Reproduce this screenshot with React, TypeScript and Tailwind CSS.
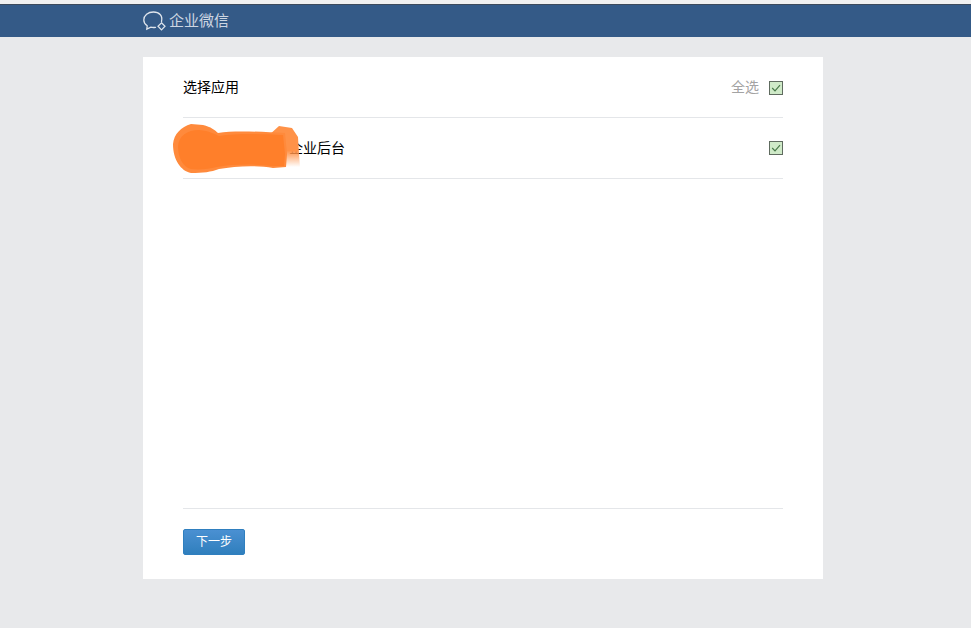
const font = { fontFamily: '"Liberation Sans", "Noto Sans CJK SC", sans-serif' };

function Check() {
  return (
    <span className="flex h-[14px] w-[14px] items-center justify-center border border-[#5f6b5f] bg-[#cfeac8]">
      <svg width="12" height="12" viewBox="0 0 12 12" fill="none">
        <path d="M2.2 6 L5 8.8 L10 3.2" stroke="#4a7a4a" strokeWidth="1.2" />
      </svg>
    </span>
  );
}

function Blob() {
  return (
    <svg className="absolute left-[-10px] top-[6px]" width="130" height="50" viewBox="0 0 130 50">
      <defs>
        <linearGradient id="fade" x1="0" y1="0" x2="0" y2="1">
          <stop offset="0.6" stopColor="#ff9248" />
          <stop offset="1" stopColor="#ff9248" stopOpacity="0" />
        </linearGradient>
      </defs>
      <path d="M95 12 L106 2 L119 4 L125 13 L126 30 L127 43 L100 43 Z" fill="url(#fade)" />
      <path d="M0 20 C1 10 8 3 18 0 L30 1 C38 3 42 6 45 9 C62 6 90 8 112 9 L114 30 L113 43 L100 44 C84 41 62 42 46 45 C38 48 30 49 18 49 C8 47 0 36 0 20 Z" fill="#ff8a3c" />
      <path d="M5 22 C6 12 14 6 26 6 C36 7 42 10 46 12 C64 9 90 10 110 11 L112 30 L111 42 L98 42 C84 40 62 40 44 43 C36 45 26 46 18 45 C10 43 5 34 5 22 Z" fill="#ff7f2a" />
    </svg>
  );
}

export default function App() {
  return (
    <div className="flex h-[628px] w-[971px] flex-col overflow-hidden bg-[#e8e9eb]" style={font}>
      <div className="h-[4px] bg-[#f0f0f0]" />
      <header className="h-[33px] border-t border-[#3d4a5c] bg-[#345a87]">
        <div className="ml-[143px] flex h-[32px] items-center gap-[2px] text-[15px] text-[#cdd6e2]">
          <svg width="24" height="22" viewBox="0 0 24 22" fill="none" stroke="#dfe5ec" strokeWidth="1.3">
            <path d="M18.5 11.5 C20 5.5 16 2 10.5 2 C5 2 0.8 5.5 0.8 10 C0.8 12.6 2.2 14.5 4.2 15.8 L3.8 19.2 L7.8 17.2 C9.5 17.6 11 17.6 12.5 17.3" strokeLinecap="round" />
            <path d="M18.5 12.8 L22 16.2 L18.5 19.8 L15 16.2 Z" strokeWidth="1.2" />
          </svg>
          <span>企业微信</span>
        </div>
      </header>
      <main className="ml-[143px] mt-[20px] flex h-[522px] w-[680px] flex-col bg-white px-[40px]">
        <div className="flex h-[61px] items-center justify-between border-b border-[#e4e6e9] text-[14px] text-black">
          <span>选择应用</span>
          <span className="flex items-center gap-[11px] text-[#a3a3a3]">
            <span className="mr-[-1px]">全选</span>
            <span className="mt-[2px]">
              <Check />
            </span>
          </span>
        </div>
        <div className="relative flex h-[61px] items-center justify-between border-b border-[#e4e6e9] text-[14px] text-black">
          <span className="pl-[106px]">企业后台</span>
          <Check />
          <Blob />
        </div>
        <div className="flex-1" />
        <div className="h-[71px] border-t border-[#e4e6e9] pt-[20px]">
          <button className="flex h-[26px] w-[62px] items-center justify-center rounded-[2px] border border-[#2f7fbf] bg-gradient-to-b from-[#4a90d2] to-[#2f7fbd] text-[12px] text-white">
            下一步
          </button>
        </div>
      </main>
    </div>
  );
}
